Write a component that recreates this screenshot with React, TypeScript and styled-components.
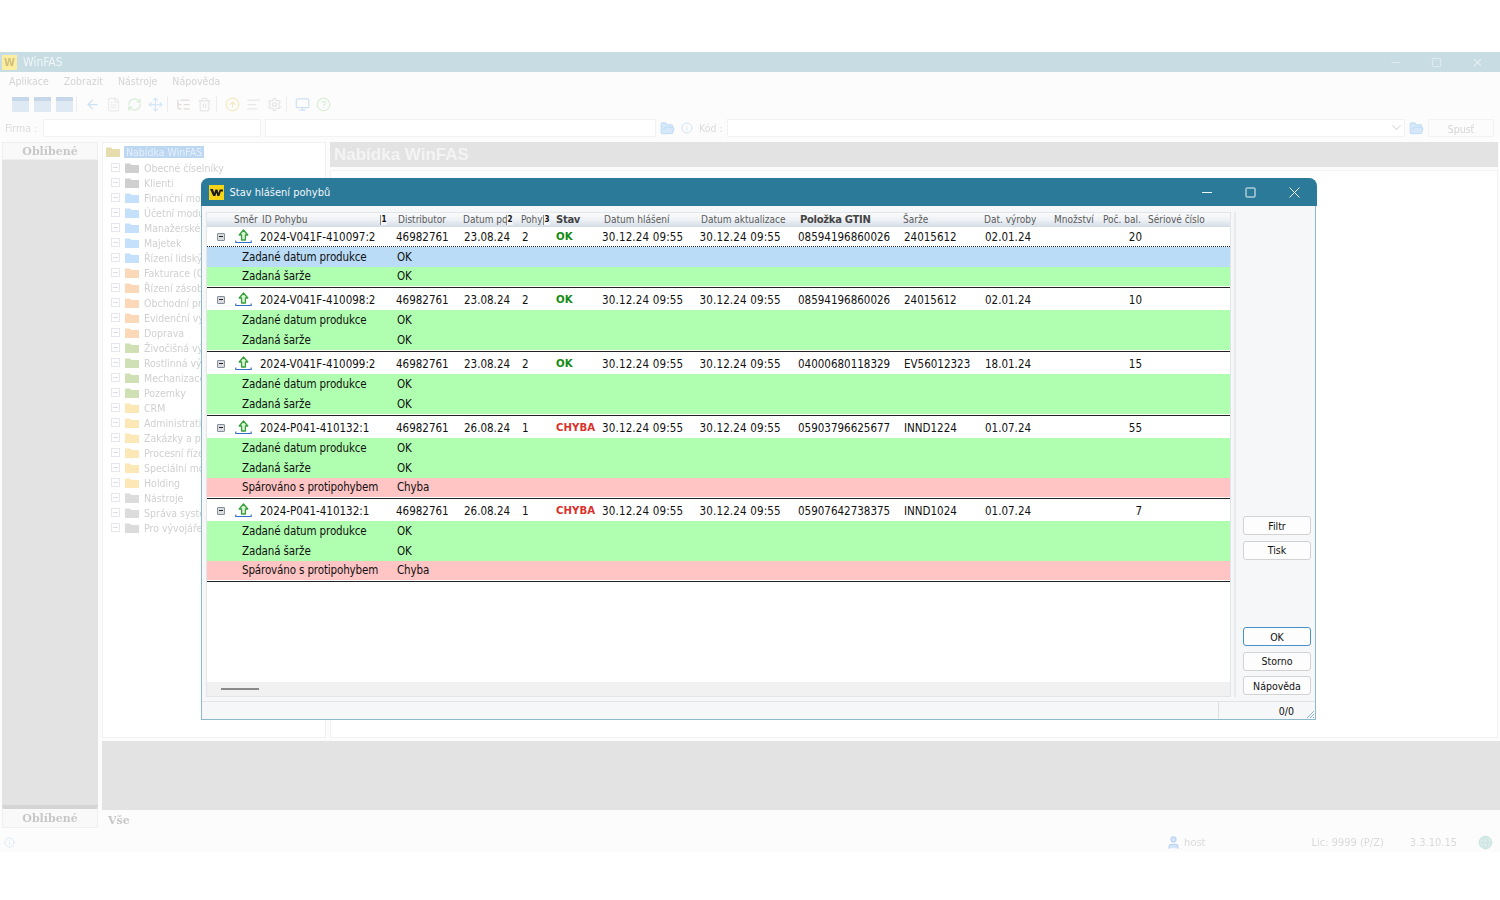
import React from 'react'
import styled, { createGlobalStyle } from 'styled-components'
import {
	ArrowLeft, ChevronDown, FileText, Info, Minus, Move, RefreshCw, Settings, Square, X, CircleHelp, Monitor,
	ListTree, Trash2, ArrowUpCircle, AlignLeft, FolderOpen, User, Globe,
} from 'lucide-react'

const UI_FONT = `"DejaVu Sans Condensed", "Liberation Sans", sans-serif`

const GlobalStyle = createGlobalStyle`
	html, body { margin: 0; padding: 0; background: #fff; }
	body { font-family: ${UI_FONT}; }
	* { box-sizing: border-box; }
`

const Page = styled.div`
	position: relative;
	width: 1500px;
	height: 900px;
	padding-top: 52px;
	overflow: hidden;
	background: #fff;
`

/* ---------- faded main window behind the dialog ---------- */

const AppWindow = styled.div`
	display: flex;
	flex-direction: column;
	height: 800px;
	background: #fcfcfc;
	filter: blur(0.6px);
	color: #d2d2d2;
	font-size: 10.5px;
`

const AppTitleBar = styled.div`
	display: flex;
	align-items: center;
	height: 20px;
	flex: none;
	padding: 0 16px 0 2px;
	background: #c8dce3;
	color: #f0f6f8;
	font-size: 12px;
	gap: 6px;
	& .controls { margin-left: auto; display: flex; align-items: center; gap: 29px; }
`

const AppLogo = styled.div`
	width: 15px;
	height: 15px;
	background: #fbeea0;
	color: #d0bf7c;
	font-size: 11px;
	font-weight: 700;
	line-height: 15px;
	text-align: center;
`

const MenuBar = styled.div`
	display: flex;
	align-items: center;
	gap: 15px;
	height: 18px;
	flex: none;
	padding-left: 9px;
	color: #d4d4d4;
`

const ToolBar = styled.div`
	display: flex;
	align-items: center;
	height: 28px;
	flex: none;
	padding-left: 12px;
	gap: 6px;
	opacity: 0.65;
`

const ToolSep = styled.span`
	width: 1px;
	height: 16px;
	margin: 0 2px 0 -2px;
	background: #e6e6e6;
`

const TableIcon = styled.span`
	width: 17px;
	height: 15px;
	margin-right: -1px;
	background: #cfe0f0;
	border-top: 4px solid #a9c4de;
`

const FilterRow = styled.div`
	display: flex;
	align-items: center;
	height: 20px;
	flex: none;
	padding-left: 5px;
	color: #dcdcdc;
`

const FieldLabel = styled.span<{ $width: number }>`
	width: ${(p) => p.$width}px;
	flex: none;
`

const FieldBox = styled.div<{ $width: number; $gap?: number }>`
	display: flex;
	justify-content: flex-end;
	width: ${(p) => p.$width}px;
	height: 18px;
	flex: none;
	margin-right: ${(p) => p.$gap ?? 4}px;
	background: #fff;
	border: 1px solid #f2f2f2;
`

const GhostButton = styled.div`
	width: 66px;
	height: 18px;
	margin-left: 4px;
	border: 1px solid #f3f3f3;
	text-align: center;
	line-height: 18px;
	color: #d6d6d6;
`

const Workspace = styled.div`
	display: grid;
	grid-template-columns: 102px 1fr;
	margin-top: 4px;
	height: 690px;
	flex: none;
`

const FavColumn = styled.div`
	display: flex;
	flex-direction: column;
	margin-left: 2px;
	width: 96px;
	height: 686px;
`

const FavHead = styled.div<{ $bottom?: boolean }>`
	height: 18px;
	flex: none;
	background: #f9f9f9;
	border: 1px solid #efefef;
	color: #c8c8c8;
	font-family: "DejaVu Serif", serif;
	font-size: 11px;
	font-weight: 700;
	text-align: center;
	line-height: 17px;
	${(p) => p.$bottom && 'border-top: 4px solid #d4d4d4; height: 23px; line-height: 20px;'}
`

const FavBody = styled.div`
	flex: 1;
	background: #e3e3e3;
`

const MainColumn = styled.div`
	display: flex;
	flex-direction: column;
`

const TopPanels = styled.div`
	display: grid;
	grid-template-columns: 224px 1fr;
	gap: 4px;
	height: 596px;
	flex: none;
`

const TreePanel = styled.div`
	background: #fff;
	border: 1px solid #f0f0f0;
	padding: 0 0 0 3px;
	overflow: hidden;
`

const TreeRoot = styled.div`
	display: flex;
	align-items: center;
	gap: 4px;
	height: 17px;
	margin-bottom: 0;
	& span {
		padding: 0 2px;
		background: #bcd7f2;
		color: #e6f0fa;
	}
`

const TreeRow = styled.div`
	display: flex;
	align-items: center;
	height: 15px;
	padding-left: 5px;
	gap: 5px;
	white-space: nowrap;
	color: #d0d0d0;
`

const Plus = styled.span`
	width: 9px;
	height: 9px;
	flex: none;
	border: 1px solid #e6e6ee;
	position: relative;
	&::after {
		content: '';
		position: absolute;
		left: 1px;
		right: 1px;
		top: 3px;
		height: 1px;
		background: #dcdce6;
	}
`

const ContentPanel = styled.div`
	display: flex;
	flex-direction: column;
	margin-right: 2px;
`

const ContentHead = styled.div`
	height: 25px;
	flex: none;
	padding-left: 4px;
	background: #e3e3e3;
	color: #f4f4f4;
	font-family: "Liberation Sans", sans-serif;
	font-size: 17px;
	font-weight: 700;
	line-height: 26px;
`

const ContentBody = styled.div`
	flex: 1;
	margin-top: 3px;
	background: #fff;
	border: 1px solid #f2f2f2;
`

const GreyStrip = styled.div`
	height: 69px;
	flex: none;
	margin-top: 3px;
	background: #e3e3e3;
`

const TabStrip = styled.div`
	height: 20px;
	flex: none;
	padding-left: 6px;
	color: #c8c8c8;
	font-family: "DejaVu Serif", serif;
	font-size: 11px;
	font-weight: 700;
	line-height: 21px;
`

const StatusLine = styled.div`
	display: flex;
	align-items: center;
	margin-top: auto;
	height: 20px;
	flex: none;
	padding: 0 7px 0 4px;
	color: #dadada;
	font-size: 11px;
	& .user { margin-left: auto; display: flex; align-items: center; gap: 3px; margin-right: 106px; }
	& .lic { margin-right: 26px; }
	& .ver { margin-right: 21px; }
`

/* ---------- dialog ---------- */

const Dialog = styled.div`
	position: absolute;
	left: 201px;
	top: 178px;
	width: 1115px;
	height: 542px;
	display: flex;
	flex-direction: column;
	background: #f6f7f8;
	border: 1.5px solid #8cb9cc;
	border-top: none;
	border-radius: 8px 8px 0 0;
	color: #111;
	font-size: 11.5px;
`

const DialogBar = styled.div`
	display: flex;
	align-items: center;
	height: 28px;
	flex: none;
	margin: 0 -1.5px;
	padding-left: 8px;
	background: #2c7a99;
	border-radius: 8px 8px 0 0;
	color: #f2f7f9;
	font-size: 11px;
`

const DialogLogo = styled.svg`
	width: 15px;
	height: 15px;
	flex: none;
	margin-right: 6px;
`

const WinButtons = styled.div`
	display: flex;
	align-items: center;
	margin-left: auto;
	margin-right: 17px;
	gap: 33px;
`

const WinGlyph = styled.svg`
	width: 11px;
	height: 11px;
	stroke: #eef5f8;
	stroke-width: 1;
	fill: none;
`

const DialogBody = styled.div`
	display: flex;
	flex: 1;
	min-height: 0;
	padding: 6px 4px 5px 4px;
`

const ListBox = styled.div`
	display: flex;
	flex-direction: column;
	width: 1025px;
	height: 485px;
	flex: none;
	background: #fff;
	border: 1px solid #e3e6e9;
`

const ListHead = styled.div`
	display: grid;
	grid-template-columns: 27px 28px 136px 65px 58px 35px 48px 97px 99px 103px 81px 70px 49px 45px 90px;
	height: 14px;
	flex: none;
	background: linear-gradient(to bottom, #fafbfc 0%, #eef1f5 50%, #d3dce6 100%);
	color: #5a5a5a;
	font-size: 10px;
	line-height: 14px;
	white-space: nowrap;
`

const HeadCell = styled.div<{ $bold?: boolean }>`
	position: relative;
	font-weight: ${(p) => (p.$bold ? 700 : 400)};
	color: ${(p) => (p.$bold ? '#444' : 'inherit')};
	font-family: ${(p) => (p.$bold ? '"DejaVu Sans", sans-serif' : 'inherit')};
	letter-spacing: ${(p) => (p.$bold ? '-0.3px' : '0')};
`

const SortBadge = styled.span<{ $right: number }>`
	position: absolute;
	right: ${(p) => p.$right}px;
	top: 2px;
	width: 7px;
	height: 10px;
	background: #f2f4f6;
	border-left: 1px solid #8a8a8a;
	color: #111;
	font-size: 8px;
	font-weight: 700;
	line-height: 10px;
	text-align: center;
`

const Rows = styled.div`
	flex: 1;
	min-height: 0;
`

const GroupBox = styled.div`
	padding-bottom: 1px;
	border-bottom: 1px solid #222;
`

const MainRow = styled.div<{ $focus?: boolean }>`
	display: grid;
	grid-template-columns: 10px 19px 24px 136px 68px 58px 34px 46px 97.5px 98.5px 106px 81px 69px 49px 39px;
	align-items: center;
	height: ${(p) => (p.$focus ? 20 : 22)}px;
	white-space: nowrap;
	${(p) => (p.$focus ? 'border-bottom: 1px dotted #222;' : 'padding-top: 1px;')}
`

const Expander = styled.span`
	display: flex;
	align-items: center;
	justify-content: center;
	width: 8px;
	height: 8px;
	background: #d8dbe0;
	border: 1px solid #868e9a;
	border-radius: 1px;
	&::after {
		content: '';
		width: 4px;
		height: 1px;
		background: #222;
	}
`

const UploadGlyph = styled.svg`
	width: 17px;
	height: 15px;
	margin-left: -1px;
`

const DateText = styled.span`
	letter-spacing: 0.15px;
`

const StatusText = styled.span<{ $bad?: boolean }>`
	color: ${(p) => (p.$bad ? '#d9322c' : '#118a11')};
	font-family: "DejaVu Sans", sans-serif;
	font-size: 10.2px;
	font-weight: 700;
`

const Qty = styled.span`
	text-align: right;
`

type Tone = 'ok' | 'error' | 'selected'

const DetailRow = styled.div<{ $tone: Tone; $dense: boolean }>`
	display: grid;
	grid-template-columns: 155px 1fr;
	align-items: center;
	height: ${(p) => (p.$dense ? 19.67 : 20)}px;
	padding-left: 35px;
	letter-spacing: -0.14px;
	background: ${(p) => (p.$tone === 'ok' ? '#b0ffb0' : p.$tone === 'error' ? '#ffc4c4' : '#badcf6')};
`

const ScrollTrack = styled.div`
	display: flex;
	align-items: center;
	height: 14px;
	flex: none;
	padding-left: 14px;
	background: #f1f1f1;
`

const ScrollThumb = styled.div`
	width: 38px;
	height: 2px;
	background: #8a8a8a;
`

const SideColumn = styled.div`
	display: flex;
	flex-direction: column;
	flex: 1;
	margin-left: 3px;
	padding: 304px 0 0 7px;
	border-left: 2px solid #e9eaec;
	height: 485px;
`

const SideButton = styled.button<{ $primary?: boolean }>`
	height: 19px;
	flex: none;
	margin-bottom: 5.5px;
	padding: 0;
	background: #fdfdfd;
	border: 1px solid ${(p) => (p.$primary ? '#4a90c8' : '#d2d2d2')};
	border-radius: 3px;
	color: #111;
	font-family: ${UI_FONT};
	font-size: 10.5px;
`

const SideSpacer = styled.div`
	height: 62px;
	flex: none;
`

const DialogStatus = styled.div`
	position: relative;
	display: flex;
	justify-content: flex-end;
	align-items: center;
	height: 18px;
	flex: none;
	border-top: 1px solid #e1e3e5;
	font-size: 10.5px;
	& span {
		width: 97px;
		height: 100%;
		padding-right: 21px;
		border-left: 1px solid #dcdee0;
		text-align: right;
		line-height: 18px;
	}
`

const ResizeGrip = styled.svg`
	position: absolute;
	right: 0;
	bottom: 0;
	width: 9px;
	height: 9px;
`

const UploadIcon = () => (
	<UploadGlyph viewBox="0 0 17 15">
		<path d="M8.5 1 L12.8 6 H10.4 V11 H6.6 V6 H4.2 Z" fill="#dff7d8" stroke="#35a03a" strokeWidth="1.3" strokeLinejoin="round" />
		<path d="M0.8 11.5 V13.5 H16.2 V11.5" fill="none" stroke="#2c6fc4" strokeWidth="1.1" />
	</UploadGlyph>
)

const FolderIcon = ({ color }: { color: string }) => (
	<svg width="14" height="11" viewBox="0 0 14 11" style={{ flex: 'none' }}>
		<path d="M0 1.5 H5 L6.5 3 H14 V11 H0 Z" fill={color} />
	</svg>
)

interface IDetail { label: string, value: string, tone: Tone }
interface IMovement {
	id: string, dist: string, date: string, moves: string, bad: boolean,
	gtin: string, batch: string, made: string, qty: string, details: IDetail[],
}

const okDetails: IDetail[] = [
	{ label: 'Zadané datum produkce', value: 'OK', tone: 'ok' },
	{ label: 'Zadaná šarže', value: 'OK', tone: 'ok' },
]
const errDetails: IDetail[] = [
	...okDetails,
	{ label: 'Spárováno s protipohybem', value: 'Chyba', tone: 'error' },
]

const movements: IMovement[] = [
	{
		id: '2024-V041F-410097:2', dist: '46982761', date: '23.08.24', moves: '2', bad: false,
		gtin: '08594196860026', batch: '24015612', made: '02.01.24', qty: '20',
		details: [{ ...okDetails[0], tone: 'selected' }, okDetails[1]],
	},
	{
		id: '2024-V041F-410098:2', dist: '46982761', date: '23.08.24', moves: '2', bad: false,
		gtin: '08594196860026', batch: '24015612', made: '02.01.24', qty: '10', details: okDetails,
	},
	{
		id: '2024-V041F-410099:2', dist: '46982761', date: '23.08.24', moves: '2', bad: false,
		gtin: '04000680118329', batch: 'EV56012323', made: '18.01.24', qty: '15', details: okDetails,
	},
	{
		id: '2024-P041-410132:1', dist: '46982761', date: '26.08.24', moves: '1', bad: true,
		gtin: '05903796625677', batch: 'INND1224', made: '01.07.24', qty: '55', details: errDetails,
	},
	{
		id: '2024-P041-410132:1', dist: '46982761', date: '26.08.24', moves: '1', bad: true,
		gtin: '05907642738375', batch: 'INND1024', made: '01.07.24', qty: '7', details: errDetails,
	},
]

const treeItems: [string, string][] = [
	['Obecné číselníky', '#cfcfcf'], ['Klienti', '#cfcfcf'],
	['Finanční moduly', '#c4e0fa'], ['Účetní moduly', '#c4e0fa'], ['Manažerské informace', '#c4e0fa'], ['Majetek', '#c4e0fa'], ['Řízení lidských zdrojů', '#c4e0fa'],
	['Fakturace (CZ)', '#fbd9b8'], ['Řízení zásob', '#fbd9b8'], ['Obchodní procesy', '#fbd9b8'], ['Evidenční výkazy', '#fbd9b8'], ['Doprava', '#fbd9b8'],
	['Živočišná výroba', '#cfe0b4'], ['Rostlinná výroba', '#cfe0b4'], ['Mechanizace', '#cfe0b4'], ['Pozemky', '#cfe0b4'],
	['CRM', '#fbe8b6'], ['Administrativa', '#fbe8b6'], ['Zakázky a projekty', '#fbe8b6'], ['Procesní řízení', '#fbe8b6'], ['Speciální moduly', '#fbe8b6'], ['Holding', '#fbe8b6'],
	['Nástroje', '#dcdcdc'], ['Správa systému', '#dcdcdc'], ['Pro vývojáře', '#dcdcdc'],
]

function BackgroundWindow() {
	return (
		<AppWindow>
			<AppTitleBar>
				<AppLogo>W</AppLogo>
				WinFAS
				<div className="controls">
					<Minus size={13} color="#e3eef2" />
					<Square size={11} color="#e3eef2" />
					<X size={13} color="#e3eef2" />
				</div>
			</AppTitleBar>
			<MenuBar>
				<span>Aplikace</span><span>Zobrazit</span><span>Nástroje</span><span>Nápověda</span>
			</MenuBar>
			<ToolBar>
				<TableIcon /><TableIcon /><TableIcon />
				<ToolSep />
				<ArrowLeft size={15} color="#b5d4f0" />
				<FileText size={15} color="#e3e3e3" />
				<RefreshCw size={15} color="#c4e4c4" />
				<Move size={15} color="#c0dcf4" />
				<ToolSep />
				<ListTree size={15} color="#d8c8c8" />
				<Trash2 size={15} color="#dcdcdc" />
				<ToolSep />
				<ArrowUpCircle size={15} color="#f0dfa0" />
				<AlignLeft size={15} color="#dcdcdc" />
				<Settings size={15} color="#d8d8d8" />
				<ToolSep />
				<Monitor size={15} color="#b8d4ee" />
				<CircleHelp size={15} color="#c8e8c0" />
			</ToolBar>
			<FilterRow>
				<FieldLabel $width={38}>Firma :</FieldLabel>
				<FieldBox $width={218} />
				<FieldBox $width={391} />
				<FolderOpen size={15} color="#c4def6" fill="#d6e8fa" />
				<Info size={12} color="#d4e4f4" style={{ margin: '0 6px 0 6px' }} />
				<FieldLabel $width={28}>Kód :</FieldLabel>
				<FieldBox $width={678}><ChevronDown size={15} color="#dedede" /></FieldBox>
				<FolderOpen size={15} color="#c4def6" fill="#d6e8fa" />
				<GhostButton>Spusť</GhostButton>
			</FilterRow>
			<Workspace>
				<FavColumn>
					<FavHead>Oblíbené</FavHead>
					<FavBody />
					<FavHead $bottom>Oblíbené</FavHead>
				</FavColumn>
				<MainColumn>
					<TopPanels>
						<TreePanel>
							<TreeRoot>
								<FolderIcon color="#e6dcae" />
								<span>Nabídka WinFAS</span>
							</TreeRoot>
							{treeItems.map(([name, color]) => (
								<TreeRow key={name}>
									<Plus />
									<FolderIcon color={color} />
									{name}
								</TreeRow>
							))}
						</TreePanel>
						<ContentPanel>
							<ContentHead>Nabídka WinFAS</ContentHead>
							<ContentBody />
						</ContentPanel>
					</TopPanels>
					<GreyStrip />
					<TabStrip>Vše</TabStrip>
				</MainColumn>
			</Workspace>
			<StatusLine>
				<Info size={11} color="#d8e6f4" />
				<div className="user"><User size={15} color="#bcd6f2" fill="#d6e6f8" />host</div>
				<span className="lic">Lic: 9999 (P/Z)</span>
				<span className="ver">3.3.10.15</span>
				<Globe size={15} color="#cfe6e0" fill="#d8ecec" />
			</StatusLine>
		</AppWindow>
	)
}

function MovementGroup({ row, first }: { row: IMovement, first: boolean }) {
	const dense = first || row.details.length > 2
	return (
		<GroupBox>
			<MainRow $focus={first}>
				<span />
				<Expander />
				<UploadIcon />
				<span>{row.id}</span>
				<span>{row.dist}</span>
				<span>{row.date}</span>
				<span>{row.moves}</span>
				<StatusText $bad={row.bad}>{row.bad ? 'CHYBA' : 'OK'}</StatusText>
				<DateText>30.12.24 09:55</DateText>
				<DateText>30.12.24 09:55</DateText>
				<span>{row.gtin}</span>
				<span>{row.batch}</span>
				<span>{row.made}</span>
				<span />
				<Qty>{row.qty}</Qty>
			</MainRow>
			{row.details.map((d) => (
				<DetailRow key={d.label} $tone={d.tone} $dense={dense}>
					<span>{d.label}</span>
					<span>{d.value}</span>
				</DetailRow>
			))}
		</GroupBox>
	)
}

export default function App() {
	return (
		<Page>
			<GlobalStyle />
			<BackgroundWindow />
			<Dialog>
				<DialogBar>
					<DialogLogo viewBox="0 0 15 15">
						<rect width="15" height="15" fill="#f7d417" />
						<path d="M1 4 H4 L5.2 8 L6.4 4.6 H8.4 L9.6 8 L10.6 4.6 H14 V6.4 H11.8 L10.4 11 H8.4 L7.4 7.8 L6.4 11 H4.2 Z" fill="#1b1b1b" />
					</DialogLogo>
					Stav hlášení pohybů
					<WinButtons>
						<WinGlyph viewBox="0 0 11 11"><path d="M1 5.5 H11" /></WinGlyph>
						<WinGlyph viewBox="0 0 11 11"><rect x="1" y="1" width="9" height="9" rx="0.5" /></WinGlyph>
						<WinGlyph viewBox="0 0 11 11"><path d="M0.5 0.5 L10.5 10.5 M10.5 0.5 L0.5 10.5" /></WinGlyph>
					</WinButtons>
				</DialogBar>
				<DialogBody>
					<ListBox>
						<ListHead>
							<HeadCell>&nbsp;</HeadCell>
							<HeadCell>Směr</HeadCell>
							<HeadCell>ID Pohybu<SortBadge $right={11}>1</SortBadge></HeadCell>
							<HeadCell>Distributor</HeadCell>
							<HeadCell>Datum po<SortBadge $right={8}>2</SortBadge></HeadCell>
							<HeadCell>Pohyb<SortBadge $right={6}>3</SortBadge></HeadCell>
							<HeadCell $bold>Stav</HeadCell>
							<HeadCell>Datum hlášení</HeadCell>
							<HeadCell>Datum aktualizace</HeadCell>
							<HeadCell $bold>Položka GTIN</HeadCell>
							<HeadCell>Šarže</HeadCell>
							<HeadCell>Dat. výroby</HeadCell>
							<HeadCell>Množství</HeadCell>
							<HeadCell>Poč. bal.</HeadCell>
							<HeadCell>Sériové číslo</HeadCell>
						</ListHead>
						<Rows>
							{movements.map((m, i) => (
								<MovementGroup key={m.gtin + m.qty} row={m} first={i === 0} />
							))}
						</Rows>
						<ScrollTrack><ScrollThumb /></ScrollTrack>
					</ListBox>
					<SideColumn>
						<SideButton>Filtr</SideButton>
						<SideButton>Tisk</SideButton>
						<SideSpacer />
						<SideButton $primary>OK</SideButton>
						<SideButton>Storno</SideButton>
						<SideButton>Nápověda</SideButton>
					</SideColumn>
				</DialogBody>
				<DialogStatus>
					<span>0/0</span>
					<ResizeGrip viewBox="0 0 9 9">
						<path d="M8 1 L1 8 M8 4 L4 8 M8 7 L7 8" stroke="#8fb6ca" strokeWidth="1" />
					</ResizeGrip>
				</DialogStatus>
			</Dialog>
		</Page>
	)
}
